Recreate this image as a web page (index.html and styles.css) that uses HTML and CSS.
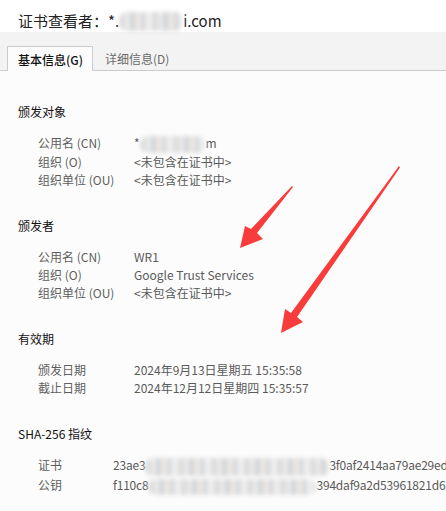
FILE: index.html
```html
<!DOCTYPE html>
<html lang="zh-CN">
<head>
<meta charset="utf-8">
<title>证书查看者</title>
<link rel="stylesheet" href="styles.css">
</head>
<body>
<div class="page">
  <header class="title">证书查看者：*.<span class="blur blur-title"></span>i.com</header>
  <nav class="tabs">
    <div class="tab active">基本信息(G)</div>
    <div class="tab">详细信息(D)</div>
  </nav>
  <main class="content">
    <section class="section">
      <h2 class="heading">颁发对象</h2>
      <div class="grid">
        <div class="label">公用名 (CN)</div><div class="value">*<span class="blur blur-cn"></span>m</div>
        <div class="label">组织 (O)</div><div class="value">&lt;未包含在证书中&gt;</div>
        <div class="label">组织单位 (OU)</div><div class="value">&lt;未包含在证书中&gt;</div>
      </div>
    </section>
    <section class="section">
      <h2 class="heading">颁发者</h2>
      <div class="grid">
        <div class="label">公用名 (CN)</div><div class="value">WR1</div>
        <div class="label">组织 (O)</div><div class="value">Google Trust Services</div>
        <div class="label">组织单位 (OU)</div><div class="value">&lt;未包含在证书中&gt;</div>
      </div>
    </section>
    <section class="section">
      <h2 class="heading">有效期</h2>
      <div class="grid">
        <div class="label">颁发日期</div><div class="value">2024年9月13日星期五 15:35:58</div>
        <div class="label">截止日期</div><div class="value">2024年12月12日星期四 15:35:57</div>
      </div>
    </section>
    <section class="section">
      <h2 class="heading">SHA-256 指纹</h2>
      <div class="grid grid-fp">
        <div class="label">证书</div><div class="value fp">23ae3<span class="blur blur-fp1"></span>3f0af2414aa79ae29ed</div>
        <div class="label">公钥</div><div class="value fp">f110c8<span class="blur blur-fp2"></span>394daf9a2d53961821d6</div>
      </div>
    </section>
  </main>
  <svg class="arrows" width="446" height="511" viewBox="0 0 446 511" aria-hidden="true">
    <polygon class="arrow" points="292,186 293,187 257,233 263,239 240,248 245,226 251,229"/>
    <polygon class="arrow" points="399,166 400,167.5 297,317 303,322 281,333 285,309 291,313"/>
  </svg>
</div>
</body>
</html>
```
FILE: styles.css
```css
* { box-sizing: border-box; margin: 0; padding: 0; }
html, body {
  width: 446px;
  height: 511px;
  overflow: hidden;
  background: #fcfcfc;
}
body {
  font-family: "Noto Sans CJK SC", "Noto Sans", sans-serif;
  font-size: 12px;
  color: #5a5a5a;
}
.page {
  position: relative;
  width: 446px;
  height: 511px;
  overflow: hidden;
}
.title {
  height: 32px;
  background: #ffffff;
  padding: 10px 0 0 18px;
  font-size: 15px;
  line-height: 22px;
  color: #222;
  white-space: nowrap;
}
.tabs {
  display: flex;
  height: 39px;
  padding: 14px 0 0 7px;
  background: #f3f3f3;
  border-bottom: 1px solid #cccccc;
}
.tab {
  height: 24px;
  padding: 3px 12px 0 12px;
  line-height: 20px;
  color: #6a6a6a;
  white-space: nowrap;
}
.tab.active {
  height: 25px;
  padding: 3px 9px 0 10px;
  border: 1px solid #cccccc;
  border-bottom: none;
  background: #fcfcfc;
  color: #111;
  font-weight: 500;
}
.content {
  padding: 32px 0 0 18px;
  display: flex;
  flex-direction: column;
  gap: 28px;
}
.heading {
  font-size: 12px;
  font-weight: normal;
  line-height: 18px;
  color: #111;
}
.grid {
  display: grid;
  grid-template-columns: 96px auto;
  margin: 13px 0 0 20px;
  line-height: 18px;
  white-space: nowrap;
}
.grid-fp { grid-template-columns: 75px auto; }
.label { color: #5e5e5e; }
.value { color: #5a5a5a; }
.value.fp { letter-spacing: -0.2px; }
.blur {
  display: inline-block;
  vertical-align: middle;
  border-radius: 8px;
  filter: blur(2px);
  background:
    repeating-linear-gradient(90deg,
      #dcdcdc 0 6px, #eaeaea 6px 11px, #d3d5d9 11px 16px,
      #ebe7e3 16px 22px, #d8dade 22px 27px, #efefef 27px 33px);
}
.blur-title { width: 64px; height: 19px; margin-top: -3px; }
.blur-cn { width: 66px; height: 17px; }
.blur-fp1 { width: 184px; height: 18px; }
.blur-fp2 { width: 168px; height: 16px; }
.arrows {
  position: absolute;
  left: 0;
  top: 0;
  pointer-events: none;
}
.arrow { fill: #f83c3c; }
```
